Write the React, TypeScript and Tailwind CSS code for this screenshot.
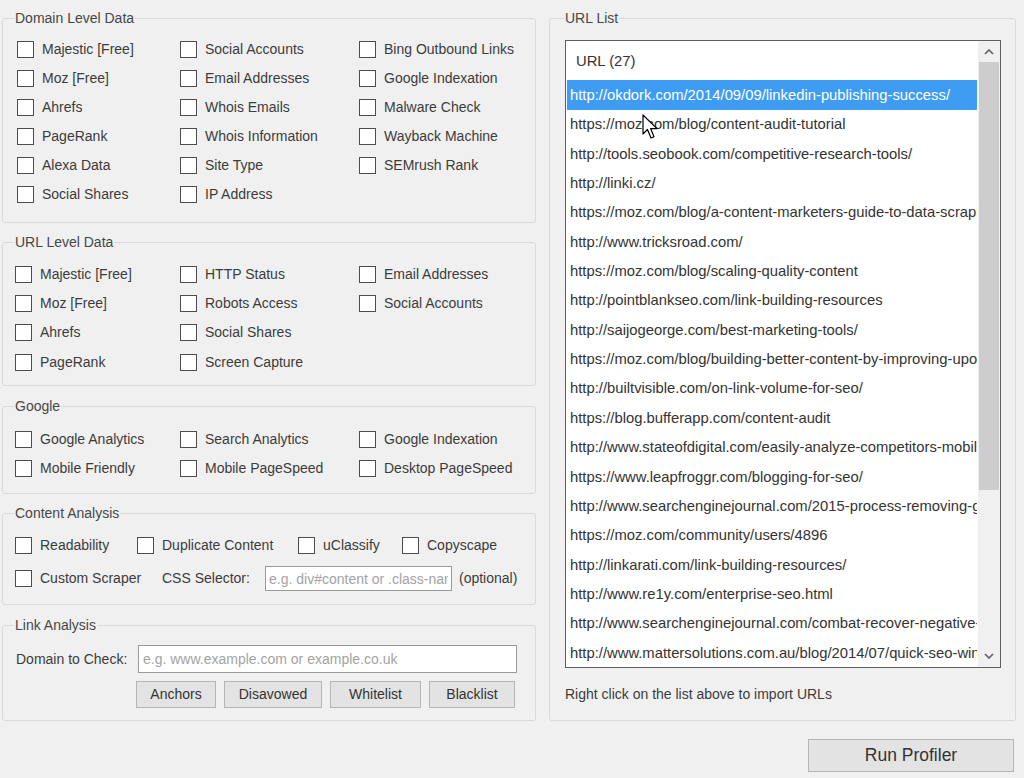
import React from 'react'

const urls = [
  'http://okdork.com/2014/09/09/linkedin-publishing-success/',
  'https://moz.com/blog/content-audit-tutorial',
  'http://tools.seobook.com/competitive-research-tools/',
  'http://linki.cz/',
  'https://moz.com/blog/a-content-marketers-guide-to-data-scraping',
  'http://www.tricksroad.com/',
  'https://moz.com/blog/scaling-quality-content',
  'http://pointblankseo.com/link-building-resources',
  'http://saijogeorge.com/best-marketing-tools/',
  'https://moz.com/blog/building-better-content-by-improving-upon-existing',
  'http://builtvisible.com/on-link-volume-for-seo/',
  'https://blog.bufferapp.com/content-audit',
  'http://www.stateofdigital.com/easily-analyze-competitors-mobile-strategy/',
  'https://www.leapfroggr.com/blogging-for-seo/',
  'http://www.searchenginejournal.com/2015-process-removing-google-penalties/',
  'https://moz.com/community/users/4896',
  'http://linkarati.com/link-building-resources/',
  'http://www.re1y.com/enterprise-seo.html',
  'http://www.searchenginejournal.com/combat-recover-negative-seo/',
  'http://www.mattersolutions.com.au/blog/2014/07/quick-seo-wins/',
]

function Check({ label }: { label: string }) {
  return (
    <div className="flex items-center gap-[8px] whitespace-nowrap">
      <span className="w-[17px] h-[17px] shrink-0 bg-white border border-[#4d4d4d]" />
      <span>{label}</span>
    </div>
  )
}

function Group({
  title,
  className,
  children,
}: {
  title: string
  className: string
  children: React.ReactNode
}) {
  return (
    <fieldset className={`border border-[#d9d9d9] rounded-[3px] ${className}`}>
      <legend className="ml-[11px] px-[1px] leading-[16px] text-[#474747]">{title}</legend>
      {children}
    </fieldset>
  )
}

function Columns({
  cols,
  widths,
  rowClass,
  className,
}: {
  cols: string[][]
  widths: string[]
  rowClass: string
  className: string
}) {
  return (
    <div className={`flex ${className}`}>
      {cols.map((col, i) => (
        <div key={i} className={`flex flex-col ${widths[i]}`}>
          {col.map((label) => (
            <div key={label} className={`flex items-center ${rowClass}`}>
              <Check label={label} />
            </div>
          ))}
        </div>
      ))}
    </div>
  )
}

function Btn({ label, className }: { label: string; className: string }) {
  return (
    <button className={`bg-[#e3e3e3] border border-[#b5b5b5] text-[#333] flex items-center justify-center ${className}`}>
      {label}
    </button>
  )
}

function Chevron({ up }: { up?: boolean }) {
  return (
    <svg width="10" height="6" viewBox="0 0 10 6">
      <path
        d={up ? 'M1 5 L5 1 L9 5' : 'M1 1 L5 5 L9 1'}
        fill="none"
        stroke="#5f5f5f"
        strokeWidth="1.6"
      />
    </svg>
  )
}

export default function App() {
  return (
    <div className="relative w-[1024px] h-[778px] overflow-hidden bg-[#f0f0f0] font-['Liberation_Sans',Arial,sans-serif] text-[14px] text-[#3c3c3c] flex pt-[10px] pl-[2px]">
      {/* left column */}
      <div className="w-[534px] flex flex-col">
        <Group title="Domain Level Data" className="h-[213px]">
          <Columns
            className="pt-[9px] pl-[14px]"
            widths={['w-[163px]', 'w-[179px]', 'flex-1']}
            rowClass="h-[29px]"
            cols={[
              ['Majestic [Free]', 'Moz [Free]', 'Ahrefs', 'PageRank', 'Alexa Data', 'Social Shares'],
              ['Social Accounts', 'Email Addresses', 'Whois Emails', 'Whois Information', 'Site Type', 'IP Address'],
              ['Bing Outbound Links', 'Google Indexation', 'Malware Check', 'Wayback Machine', 'SEMrush Rank'],
            ]}
          />
        </Group>

        <Group title="URL Level Data" className="h-[152px] mt-[11px]">
          <Columns
            className="pt-[9.5px] pl-[12px]"
            widths={['w-[165px]', 'w-[179px]', 'flex-1']}
            rowClass="h-[29.3px]"
            cols={[
              ['Majestic [Free]', 'Moz [Free]', 'Ahrefs', 'PageRank'],
              ['HTTP Status', 'Robots Access', 'Social Shares', 'Screen Capture'],
              ['Email Addresses', 'Social Accounts'],
            ]}
          />
        </Group>

        <Group title="Google" className="h-[96px] mt-[12px]">
          <Columns
            className="pt-[11.5px] pl-[12px]"
            widths={['w-[165px]', 'w-[179px]', 'flex-1']}
            rowClass="h-[28.5px]"
            cols={[
              ['Google Analytics', 'Mobile Friendly'],
              ['Search Analytics', 'Mobile PageSpeed'],
              ['Google Indexation', 'Desktop PageSpeed'],
            ]}
          />
        </Group>

        <Group title="Content Analysis" className="h-[100px] mt-[11px]">
          <div className="pt-[10px] pl-[12px]">
            <div className="flex items-center h-[29px]">
              <div className="w-[122px]"><Check label="Readability" /></div>
              <div className="w-[161px]"><Check label="Duplicate Content" /></div>
              <div className="w-[104px]"><Check label="uClassify" /></div>
              <Check label="Copyscape" />
            </div>
            <div className="flex items-center h-[29px] mt-[4px]">
              <div className="w-[147px]"><Check label="Custom Scraper" /></div>
              <span className="w-[103px]">CSS Selector:</span>
              <input
                className="w-[187px] h-[25px] bg-white border border-[#9a9a9a] px-[3px] text-[14px] placeholder:text-[#a3a3a3] outline-none"
                placeholder="e.g. div#content or .class-name"
              />
              <span className="ml-[7px]">(optional)</span>
            </div>
          </div>
        </Group>

        <Group title="Link Analysis" className="h-[104px] mt-[12px]">
          <div className="pl-[13px]">
            <div className="flex items-center mt-[12px] h-[28px]">
              <span className="w-[122px]">Domain to Check:</span>
              <input
                className="w-[379px] h-[28px] bg-white border border-[#9a9a9a] px-[4px] text-[14px] placeholder:text-[#a3a3a3] outline-none"
                placeholder="e.g. www.example.com or example.co.uk"
              />
            </div>
            <div className="flex gap-[8px] mt-[8px] ml-[120px]">
              <Btn label="Anchors" className="w-[80px] h-[27px]" />
              <Btn label="Disavowed" className="w-[98px] h-[27px]" />
              <Btn label="Whitelist" className="w-[91px] h-[27px]" />
              <Btn label="Blacklist" className="w-[86px] h-[27px]" />
            </div>
          </div>
        </Group>
      </div>

      {/* right column */}
      <div className="w-[467px] ml-[13px] flex flex-col">
        <fieldset className="h-[711px] border border-[#d9d9d9] rounded-[3px]">
          <legend className="ml-[14px] px-[1px] leading-[16px] text-[#474747]">URL List</legend>
          <div className="mt-[14px] ml-[15px] w-[436px] h-[628px] border border-[#5f5f5f] bg-white flex">
            <div className="flex-1 overflow-hidden px-[1px] text-[14.8px] text-[#333]">
              <div className="h-[39.3px] flex items-center pl-[9px]">URL (27)</div>
              {urls.map((u, i) => (
                <div
                  key={u}
                  className={`h-[29.37px] flex items-center pl-[3px] whitespace-nowrap overflow-hidden ${
                    i === 0 ? 'bg-[#3f9cf3] text-white' : ''
                  }`}
                >
                  {u}
                </div>
              ))}
            </div>
            <div className="w-[22px] bg-[#f0f0f0] flex flex-col">
              <div className="h-[21px] flex items-center justify-center">
                <Chevron up />
              </div>
              <div className="h-[428px] bg-[#cdcdcd] mx-[1px]" />
              <div className="flex-1" />
              <div className="h-[22px] flex items-center justify-center">
                <Chevron />
              </div>
            </div>
          </div>
          <div className="mt-[18px] ml-[15px] leading-[16px]">Right click on the list above to import URLs</div>
        </fieldset>
        <Btn label="Run Profiler" className="self-end mr-[2px] mt-[18px] w-[206px] h-[33px] text-[17.5px]" />
      </div>

      {/* mouse pointer */}
      <svg className="absolute left-[642px] top-[114px]" width="17" height="26" viewBox="0 0 17 26">
        <path
          d="M1 1 L1 20 L5.5 15.5 L9 24 L12 22.8 L8.6 14.6 L15 14.6 Z"
          fill="#fff"
          stroke="#000"
          strokeWidth="1.2"
          strokeLinejoin="round"
        />
      </svg>
    </div>
  )
}
